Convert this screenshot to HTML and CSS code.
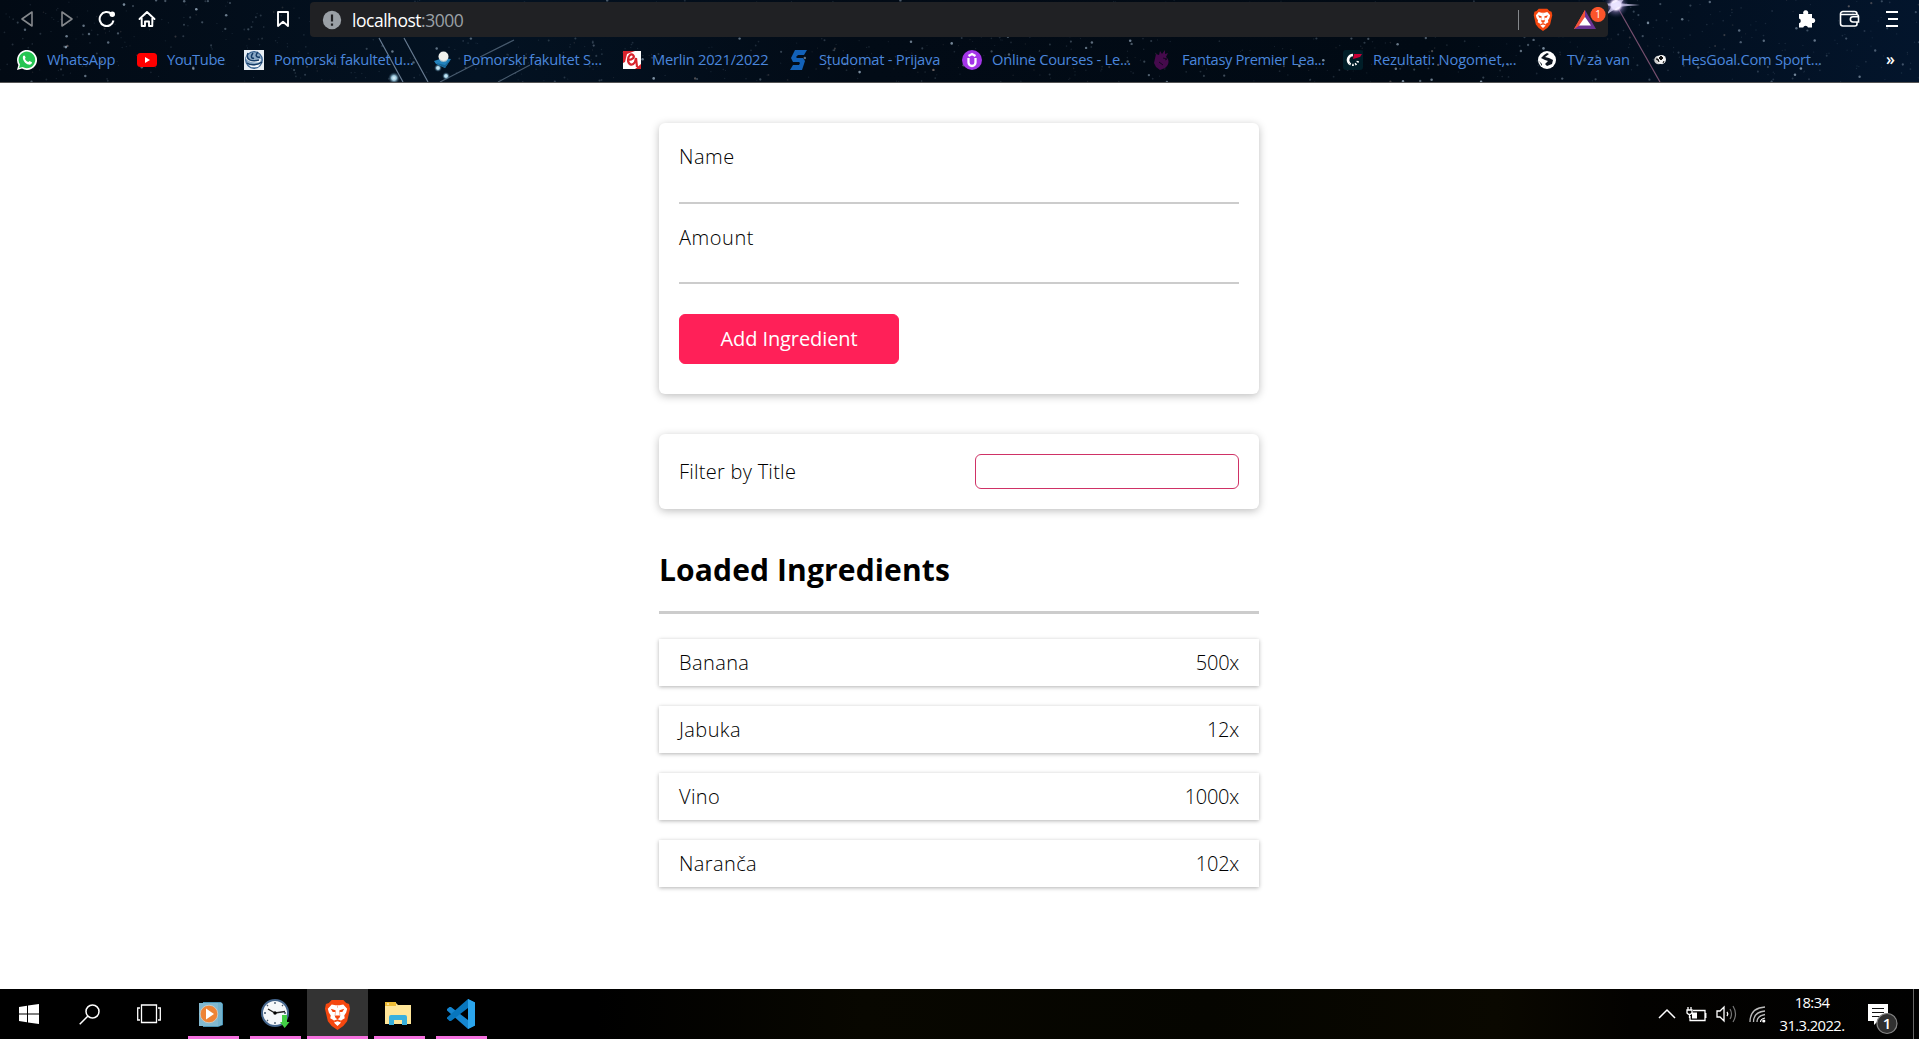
FILE: index.html
```html
<!DOCTYPE html>
<html lang="en">
<head>
<meta charset="utf-8">
<title>Ingredients</title>
<link rel="stylesheet" href="styles.css">
</head>
<body>
<header class="browser">
  <svg class="sky" viewBox="0 0 1919 82" aria-hidden="true">
    <defs>
      <radialGradient id="flare"><stop offset="0" stop-color="#fff"/><stop offset=".35" stop-color="#f3eaff"/><stop offset=".55" stop-color="#8a7ab8" stop-opacity=".5"/><stop offset="1" stop-color="#243058" stop-opacity="0"/></radialGradient>
      <radialGradient id="glow"><stop offset="0" stop-color="#e4f7ff"/><stop offset=".4" stop-color="#9cc8dd"/><stop offset="1" stop-color="#12304a" stop-opacity="0"/></radialGradient>
    </defs>
    <g id="stars"></g>
    <g stroke="#7f95ac" stroke-width="1.2" fill="none">
      <path d="M379 38 403 82M404 38 428 82" opacity=".8"/>
      <path d="M440 82 475 64M498 82 530 65M480 57 514 40" opacity=".55"/>
      <path d="M1618 8 1660 82" stroke="#77506f"/>
    </g>
    <circle cx="394" cy="78" r="6" fill="url(#glow)"/><circle cx="438" cy="68" r="4" fill="url(#glow)"/><circle cx="446" cy="76" r="4" fill="url(#glow)"/>
    <circle cx="1616" cy="5" r="13" fill="url(#flare)"/>
    <path d="M1600 4 1616 3 1640 5 1616 7ZM1606 15 1614 3 1626 -3 1618 7Z" fill="#e3dcff" opacity=".7"/>
  </svg>

  <div class="toolbar">
    <svg class="i-back" width="14" height="18" viewBox="0 0 14 18"><path d="M12 2V16L2 9Z" fill="none" stroke="#85888c" stroke-width="1.6" stroke-linejoin="round"/></svg>
    <svg class="i-fwd" width="14" height="18" viewBox="0 0 14 18"><path d="M2 2V16L12 9Z" fill="none" stroke="#85888c" stroke-width="1.6" stroke-linejoin="round"/></svg>
    <svg class="i-reload" width="18" height="18" viewBox="0 0 18 18"><path d="M15.5 10.5A7 7 0 1 1 13.5 4" fill="none" stroke="#fff" stroke-width="2"/><circle cx="14.3" cy="4.3" r="2.7" fill="#fff"/></svg>
    <svg class="i-home" width="18" height="18" viewBox="0 0 18 18"><path d="M1.5 9 9 2 16.5 9M3.7 8V16H7V11.5H11V16H14.3V8" fill="none" stroke="#fff" stroke-width="1.9" stroke-linejoin="round" stroke-linecap="round"/></svg>
    <svg class="i-mark" width="14" height="18" viewBox="0 0 14 18"><path d="M2 2H12V16L7 11.8 2 16Z" fill="none" stroke="#fff" stroke-width="1.9" stroke-linejoin="round"/></svg>
    <div class="address">
      <svg class="i-info" width="20" height="20" viewBox="0 0 20 20"><circle cx="10" cy="10" r="9.2" fill="#9aa0a6"/><path d="M10 4.5V11.5M10 13.5V15.8" stroke="#202124" stroke-width="2.2"/></svg>
      <span class="url">localhost<span class="port">:3000</span></span>
      <i class="sep"></i>
      <svg class="i-brave" width="20" height="23" viewBox="0 0 28 32"><use href="#lion"/></svg>
      <svg class="i-bat" width="34" height="25" viewBox="0 0 34 25"><path d="M12 3 1 22H12L12 3Z" fill="#ff5a36"/><path d="M12 3 23 22H1L12 13Z" fill="#6b3394"/><path d="M12 3 1 22 12 15Z" fill="#f1513a"/><path d="M12 10 6 18.5H18Z" fill="#fff"/><circle cx="25" cy="7.5" r="7.6" fill="#fb542b"/><text x="25" y="11" text-anchor="middle" font-size="10" fill="#fff">1</text></svg>
    </div>
    <svg class="i-puzzle" width="20" height="20" viewBox="0 0 20 20"><path d="M2 5H6.4A2.6 2.6 0 1 1 11 5H15V9.2A2.5 2.5 0 1 1 15 14V18.5H11A2.5 2.5 0 0 0 6.2 18.5H2V14.3A2.5 2.5 0 0 0 2 9.5Z" fill="#fff"/></svg>
    <svg class="i-wallet" width="21" height="18" viewBox="0 0 21 18"><path d="M18 5V4A2.5 2.5 0 0 0 15.500 1.500H4A2.500 2.500 0 0 0 1.500 4V13.500A2.500 2.500 0 0 0 4 16H16A2 2 0 0 0 18 14V12M1.500 4.500H17A2 2 0 0 1 19.500 6.500V12H14A2.600 2.600 0 0 1 14 6.700H19" fill="none" stroke="#fff" stroke-width="1.6"/></svg>
    <svg class="i-menu" width="12" height="18" viewBox="0 0 12 18"><path d="M0 2H12M2 9H12M0 16H12" stroke="#fff" stroke-width="1.8"/></svg>
  </div>

  <nav class="bookmarks">
    <a><svg width="20" height="20" viewBox="0 0 20 20"><path d="M0 20 1.400 15A10 10 0 1 1 5 18.600Z" fill="#fff"/><path d="M2 18 3 14.500A8.300 8.300 0 1 1 5.600 17Z" fill="#25c552"/><path d="M6 6.200C7 4.800 8 5.500 8.600 7.500L8 9C8.800 10.500 10 11.500 11.300 12L12.500 11 15 12.300C15 14.500 13 15 11.500 14.600 8.500 13.800 5 10 6 6.200Z" fill="#fff"/></svg><span class="wide">WhatsApp</span></a>
    <a><svg width="20" height="20" viewBox="0 0 20 20"><rect y="3" width="20" height="14" rx="3.500" fill="#f00"/><path d="M8 7V13L13 10Z" fill="#fff"/></svg><span>YouTube</span></a>
    <a><svg width="20" height="20" viewBox="0 0 20 20"><path d="M0 0H20V20H0Z" fill="#e9eff5"/><circle cx="10" cy="10" r="8.300" fill="#8ba9c6" stroke="#36608f" stroke-width="1.200"/><path d="M3 4C3 10 8 11 17 9L16 12Q8 14 2 9ZM4 14Q10 17 17 13L14 17H7Z" fill="#f5f8fb"/><path d="M4 3C1 10 8 12 15 10M9 3C6 7 8 9 10 8M14 2C11 5 12 8 16 7M3 13C7 16 14 15 18 12" fill="none" stroke="#153c68" stroke-width="1.500"/></svg><span class="wide">Pomorski fakultet u...</span></a>
    <a><svg width="20" height="20" viewBox="0 0 20 20"><path d="M1 11 10 8 18 9 12 18 3 14Z" fill="#2383bd"/><path d="M3 13 12 15 18 9 12 18Z" fill="#176596"/><circle cx="10.500" cy="6.500" r="5" fill="#f1f2ed"/><path d="M6 8.500Q11 13 15 8.500L13 11.500H8Z" fill="#bac6ca"/></svg><span class="wide">Pomorski fakultet S...</span></a>
    <a><svg width="20" height="20" viewBox="0 0 20 20"><path d="M1 1H19V19H1Z" fill="#fff"/><path d="M1 1H13L5 4 3 12 1 13ZM19 19H13L19 14Z" fill="#d8242d"/><path d="M6 10C11 10 13 7 11 5S6 6 6 10 10 17 13 12L14 8 15 17" fill="none" stroke="#d8242d" stroke-width="2.200"/></svg><span class="wide">Merlin 2021/2022</span></a>
    <a><svg width="20" height="20" viewBox="0 0 20 20"><path d="M6 0H18L15 5H9L7 7 8 8H14L16 11 13 20H1L4 15H10L11 13 10 12H4L2 8Z" fill="#1261b8"/></svg><span class="wide">Studomat - Prijava</span></a>
    <a><svg width="20" height="20" viewBox="0 0 20 20"><circle cx="10" cy="10" r="10" fill="#a435e8"/><path d="M6.500 8V12.500A3.500 3.500 0 0 0 13.500 12.500V8M6.500 6 10 4 13.500 6" fill="none" stroke="#fff" stroke-width="2.300"/></svg><span class="wide">Online Courses - Le...</span></a>
    <a><svg width="20" height="20" viewBox="0 0 20 20"><path d="M4 4 7 5 8 1 10 4 13 0 13 4 16 3 14 7C18 10 17 15 13 18L8 20 4 17 2 13Z" fill="#450a4c"/><path d="M11 8 15 9 13 10M7 12 11 15" stroke="#120820" fill="none"/></svg><span>Fantasy Premier Lea...</span></a>
    <a><svg width="20" height="20" viewBox="0 0 20 20"><rect width="20" height="20" rx="3" fill="#001e28"/><path d="M10 5A5 5 0 0 0 6.500 13.500" fill="none" stroke="#fff" stroke-width="2.600"/><path d="M6.500 13.500A5 5 0 0 0 15 10" fill="none" stroke="#fff" stroke-width="2.300" stroke-dasharray="1.500 1.500"/><path d="M11 4H19L17 7 10 9Z" fill="#c80037"/></svg><span class="wider">Rezultati: Nogomet,...</span></a>
    <a><svg width="20" height="20" viewBox="0 0 20 20"><circle cx="10" cy="10" r="9" fill="#fff"/><path d="M10 3 7 5 4 8 8 10 11 11 8 14 10 16 15 14 16 10 12 8 8 7 12 4ZM2 11 5 14V16Z" fill="#0d1520"/></svg><span class="wider">TV za van</span></a>
    <a><svg width="20" height="20" viewBox="0 0 20 20"><circle cx="7.500" cy="10" r="4.300" fill="#ccc"/><circle cx="10.500" cy="9.500" r="4.500" fill="#f4f4f4"/><path d="M5 9H7L8 12M10 6 12 8 10 10 8 8ZM13 11 12 13" stroke="#111" fill="#111"/></svg><span class="wide">HesGoal.Com Sport...</span></a>
    <a class="more">»</a>
  </nav>
</header>

<main class="page">
  <section class="card form">
    <label for="name">Name</label>
    <input id="name" type="text">
    <label for="amount">Amount</label>
    <input id="amount" type="text">
    <button type="button">Add Ingredient</button>
  </section>
  <section class="card filter">
    <label for="filter">Filter by Title</label>
    <input id="filter" type="text">
  </section>
  <section class="list">
    <h2>Loaded Ingredients</h2>
    <ul>
      <li><span>Banana</span><span class="amount">500x</span></li>
      <li><span>Jabuka</span><span class="amount">12x</span></li>
      <li><span>Vino</span><span class="amount">1000x</span></li>
      <li><span>Naranča</span><span class="amount">102x</span></li>
    </ul>
  </section>
</main>

<footer class="taskbar">
  <div class="slot start"><svg width="20" height="20" viewBox="0 0 20 20"><path d="M0 3 8 1.700V9.400H0ZM9 1.500 20 0V9.400H9ZM0 10.400H8V18.200L0 17ZM9 10.400H20V20L9 18.400Z" fill="#fff"/></svg></div>
  <div class="slot search"><svg width="21" height="21" viewBox="0 0 21 21"><circle cx="13.500" cy="7.500" r="6.500" fill="none" stroke="#fff" stroke-width="1.500"/><path d="M9 12 .700 20.300" stroke="#fff" stroke-width="1.500"/></svg></div>
  <div class="slot views"><svg width="24" height="20" viewBox="0 0 24 20"><path d="M4.500 1H19.500V18.500H4.500ZM3 4H.700V16H3M21 4H23.300V16H21" fill="none" stroke="#fff" stroke-width="1.300"/></svg></div>
  <div class="slot app media"><svg width="26" height="26" viewBox="0 0 26 26"><path d="M5 1H23L25 3V24L20 26H5Z" fill="#4a94b6"/><path d="M1 2H20V25H1Z" fill="#83b9d0"/><path d="M21 2V25M23 2V24" stroke="#9dd1e4"/><circle cx="11" cy="13" r="8.800" fill="#ee8436" stroke="#d4dad8" stroke-width=".700"/><path d="M8 7.500V18.500L16 13Z" fill="#fff"/></svg></div>
  <div class="slot app clock"><svg width="29" height="30" viewBox="0 0 29 30"><circle cx="14" cy="14" r="13" fill="#f5f7fa" stroke="#44658c" stroke-width="2"/><path d="M14 3V5M14 23V25M3 14H5M23 14H25M6 6 7 7M22 6 21 7M6 22 7 21" stroke="#42566c" stroke-width="1.300"/><path d="M7 10 14 14 24 12.500" fill="none" stroke="#222" stroke-width="1.300"/><circle cx="14" cy="14" r="1.700"/><path d="M21 16H26V23H28.500L23.700 29 19 23H21Z" fill="#43cf45"/></svg></div>
  <div class="slot app active"><svg width="27" height="31" viewBox="0 0 28 32"><g id="lion"><path d="M8 1H20L23 4 26 5 27 10 24 23 20 28 14 32 8 28 4 23 1 10 2 5 5 4Z" fill="#f5470f"/><path d="M8 5.500 12 6.500H16L20 5.500 24 10 23 14 21 17 21.500 20 18 22 17 25 14 28 11 25 10 22 6.500 20 7 17 5 14 4 10Z" fill="#fff"/><path d="M7 10 12 11.500 12 13.500 9 13.500ZM21 10 16 11.500 16 13.500 19 13.500ZM11 17H17L16 19.500 14 21 12 19.500ZM10 22.500 14 21 18 22.500 17 24 14 23 11 24Z" fill="#f5470f"/><path d="M12 13 11.500 17M16 13 16.500 17M14 6.500V9" stroke="#f9a184" stroke-width=".8"/></g></svg></div>
  <div class="slot app folder"><svg width="28" height="24" viewBox="0 0 28 24"><path d="M1 1H12L14 3H27V22H1Z" fill="#ffe699"/><path d="M1 0H12V4H1Z" fill="#eebd36"/><path d="M3 2H5" stroke="#fff"/><path d="M5 23V15Q5 13 7 13H21Q23 13 23 15V23H18V18H10V23Z" fill="#38b0de"/></svg></div>
  <div class="slot app code"><svg width="30" height="30" viewBox="0 0 30 30"><path d="M22 0 29 3.500V26.500L22 30 1 11.500V10L3.500 8H5L22 21Z" fill="#1686d0"/><path d="M1 19.500 3.500 22H5L22 9V0L1 18.500Z" fill="#0876bd"/><path d="M22 0 29 3.500V26.500L22 30Z" fill="#2ba5ed"/></svg></div>
  <div class="tray">
    <svg class="t-up" width="18" height="12" viewBox="0 0 18 12"><path d="M1 10 9 2 17 10" fill="none" stroke="#fff" stroke-width="1.500"/></svg>
    <svg class="t-bat" width="21" height="15" viewBox="0 0 21 15"><path d="M7 3.500H19V13.500H4V9M19.800 6V11M1 3H6V6Q3.500 9 1 6ZM2 0V3M5 0V3M3.500 7V11" fill="none" stroke="#fff" stroke-width="1.300"/><path d="M6 5.500H11V11.500H6Z" fill="#fff"/></svg>
    <svg class="t-vol" width="21" height="18" viewBox="0 0 21 18"><path d="M1 6H4L8 2V16L4 12H1Z" fill="none" stroke="#fff" stroke-width="1.300"/><path d="M11 7Q12.500 9 11 11" fill="none" stroke="#fff" stroke-width="1.300"/><path d="M14 4Q17 9 14 14M17 1Q22 9 17 17" fill="none" stroke="#777" stroke-width="1.200"/></svg>
    <svg class="t-net" width="17" height="17" viewBox="0 0 17 17"><path d="M1 16Q1 2 16 1M4.500 16Q4.500 6 16 5M8 16Q8 10 16 8.500" fill="none" stroke="#bbb" stroke-width="1.300"/><path d="M11.500 16Q11.500 13 16 12" fill="none" stroke="#fff" stroke-width="1.200"/><circle cx="14.800" cy="15" r="1.600" fill="#fff"/></svg>
    <div class="time"><span>18:34</span><span>31.3.2022.</span></div>
    <svg class="t-note" width="31" height="31" viewBox="0 0 31 31"><path d="M1 0H21V17H11L7 21V17H1Z" fill="#fff"/><path d="M5 4.500H17M5 8.500H17M5 12.500H13" stroke="#111" stroke-width="1.200"/><circle cx="20" cy="19.500" r="10" fill="#303030" stroke="#858585" stroke-width="1.200"/><text x="20" y="25" text-anchor="middle" font-size="15" font-weight="600" fill="#fff">1</text></svg>
    <i class="peek"></i>
  </div>
</footer>
<script src="stars.js"></script>
</body>
</html>
```
FILE: styles.css
```css
* { box-sizing: border-box; }
body {
  margin: 0;
  height: 1039px;
  display: flex;
  flex-direction: column;
  overflow: hidden;
  background: #fff;
  font-family: "Open Sans", "Noto Sans", sans-serif;
  font-size: 20px;
}
svg { display: block; flex: none; }

/* Browser chrome */
.browser {
  position: relative;
  height: 83px;
  flex: none;
  border-bottom: 1px solid #555;
  background: linear-gradient(90deg, #020a14, #031222 25%, #020b16 45%, #010a14 75%, #03152c);
}
.sky { position: absolute; left: 0; top: 0; width: 1919px; height: 82px; }
.toolbar { position: relative; display: flex; align-items: center; height: 38px; padding-left: 20px; }
.i-fwd { margin-left: 26px; }
.i-reload { margin-left: 24px; }
.i-home { margin-left: 22px; }
.i-mark { margin-left: 120px; }
.address {
  display: flex;
  align-items: center;
  width: 1298px;
  height: 35px;
  margin: 1px 0 0 20px;
  padding-left: 12px;
  border-radius: 4px;
  background: #202124;
}
.url { width: 1166px; margin-left: 10px; color: #fff; font-size: 17.5px; letter-spacing: -.47px; line-height: 34px; }
.port { color: #9aa0a6; }
.sep { width: 1px; height: 20px; background: #85888c; }
.i-brave { margin-left: 14px; }
.i-bat { margin: 0 0 0 20px; }
.i-puzzle { margin-left: 189px; }
.i-wallet { margin-left: 22px; }
.i-menu { margin-left: 26px; }
.bookmarks {
  position: relative;
  display: grid;
  grid-template-columns: 120px 107px 189px 189px 167px 173px 190px 191px 194px 114px 235px 20px;
  align-items: center;
  height: 44px;
  padding-left: 17px;
  color: #4a86dc;
  font-size: 14.7px;
}
.bookmarks a { display: flex; align-items: center; gap: 10px; line-height: 20px; white-space: nowrap; letter-spacing: -.35px; }
.bookmarks span { padding-bottom: 2px; }
.bookmarks .wide { letter-spacing: -.24px; }
.bookmarks .wider { letter-spacing: -.12px; }
.bookmarks .more { color: #fff; font-size: 16px; font-weight: 600; padding-bottom: 2px; }

/* Page */
.page { flex: 1; width: 600px; margin: 40px 0 0 659px; color: #000; font-weight: 300; }
.card { border-radius: 6px; background: #fff; box-shadow: 0 2px 8px rgba(0, 0, 0, .26); padding: 20px; }
.form { display: flex; flex-direction: column; height: 271px; }
.form label { height: 27px; line-height: 28px; letter-spacing: .55px; }
.form input { height: 34px; margin: 0 0 19px; padding: 0; border: 0; border-bottom: 2px solid #ccc; background: transparent; }
.form input + label { line-height: 30px; }
.form button {
  width: 220px;
  height: 50px;
  margin-top: 11px;
  padding: 0 0 2px;
  border: 1px solid #ff2058;
  border-radius: 6px;
  background: #ff2058;
  color: #fff;
  font: inherit;
  font-weight: 400;
  letter-spacing: -.1px;
}
.filter { display: flex; align-items: center; justify-content: space-between; height: 75px; margin-top: 40px; }
.filter label { letter-spacing: .26px; }
.filter input { width: 264px; height: 35px; margin: 0; border: 1px solid #cf3266; border-radius: 6px; background: #fff; }
.list h2 { height: 105px; margin: 0; padding-top: 40px; border-bottom: 3px solid #ccc; font-size: 30px; font-weight: 700; line-height: 41px; letter-spacing: .13px; }
.list ul { display: flex; flex-direction: column; gap: 20px; margin: 25px 0 0; padding: 0; list-style: none; }
.list li { display: flex; align-items: center; justify-content: space-between; height: 47px; padding: 0 20px; box-shadow: 0 1px 4px rgba(0, 0, 0, .3); letter-spacing: .4px; }
.list .amount { letter-spacing: -.25px; }

/* Taskbar */
.taskbar {
  display: flex;
  flex: none;
  height: 50px;
  background: linear-gradient(90deg, #000 31%, #080700 45%, #050500 63%, #0a0800 78%, #030200 85%, #010101);
  color: #fff;
}
.slot { display: flex; align-items: center; justify-content: center; }
.start { width: 58px; }
.search { width: 62px; }
.views { width: 58px; }
.app { width: 51px; padding-top: 3px; border-bottom: 3px solid #f670df; }
.media { margin: 0 11px 0 10px; padding-right: 5px; }
.clock { margin: 0 6px 0 0; }
.active { width: 61px; padding-right: 1px; background: #333; }
.folder { margin: 0 11px 0 6px; padding-right: 3px; }
.code { padding-right: 2px; }
.tray { display: flex; align-items: center; margin-left: auto; }
.t-up { margin-right: 10px; }
.t-bat { margin-right: 9px; }
.t-vol { margin-right: 12px; }
.time { display: flex; flex-direction: column; align-items: center; width: 66px; margin: 0 22px 0 13px; font-size: 14.8px; line-height: 23px; letter-spacing: -.6px; white-space: nowrap; }
.t-note { margin: 10px 15px 0 0; }
.peek { width: 1px; height: 50px; margin-right: 5px; background: #666; }
```
FILE: stars.js
```js
// Scatter small stars over the toolbar theme with a fixed seed.
let seed = 4711;
const rnd = () => (seed = (seed * 16807) % 2147483647) / 2147483647;
const group = document.getElementById("stars");
for (let i = 0; i < 1100; i++) {
  const star = document.createElementNS("http://www.w3.org/2000/svg", "circle");
  const bright = rnd();
  star.setAttribute("cx", (rnd() * 1919).toFixed(1));
  star.setAttribute("cy", (rnd() * 82).toFixed(1));
  star.setAttribute("r", (0.6 + bright * bright * 0.7).toFixed(2));
  star.setAttribute("fill", rnd() > 0.85 ? "#b9a49c" : "#9fb3c6");
  star.setAttribute("opacity", (0.14 + Math.pow(bright, 7) * 0.65).toFixed(2));
  group.appendChild(star);
}
```
